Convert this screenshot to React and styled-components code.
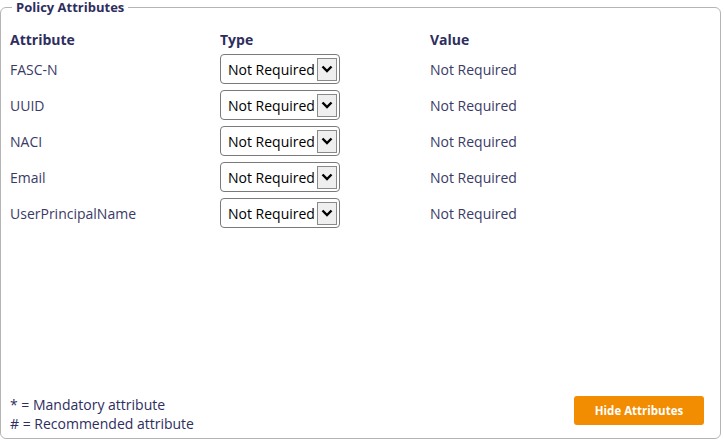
import React from "react";
import styled, { createGlobalStyle } from "styled-components";

const GlobalStyle = createGlobalStyle`
  html, body {
    margin: 0;
    padding: 0;
    background: #ffffff;
  }
  body {
    font-family: "Open Sans", "Noto Sans", sans-serif;
    color: #2e2e5e;
  }
`;

const Panel = styled.fieldset`
  box-sizing: border-box;
  width: 721px;
  height: 439px;
  margin: 0;
  padding: 0 0 0 9px;
  border: 1px solid #b4b4b4;
  border-radius: 6px;
  display: flex;
  flex-direction: column;
`;

const Legend = styled.legend`
  margin-left: 2px;
  padding: 0 4px;
  font-size: 13px;
  font-weight: 700;
  color: #2e2e5e;
  line-height: 14px;
`;

const Table = styled.div`
  display: grid;
  grid-template-columns: 210px 210px 1fr;
  grid-auto-rows: 36px;
  align-items: center;
  margin-top: 1px;
`;

const HeadCell = styled.div`
  font-size: 14px;
  font-weight: 700;
  color: #2e2e5e;
  align-self: end;
  height: 22px;
  line-height: 22px;
`;

const Cell = styled.div`
  font-size: 14px;
  color: #3a3a66;
`;

const SelectBox = styled.div`
  box-sizing: border-box;
  width: 120px;
  height: 30px;
  border: 1px solid #7a7a7a;
  border-radius: 4px;
  background: #fff;
  display: flex;
  align-items: center;
  justify-content: space-between;
  padding: 0 2px 0 7px;
  font-size: 14px;
  color: #000;
  white-space: nowrap;
`;

const ArrowBox = styled.span`
  box-sizing: border-box;
  flex: none;
  width: 20px;
  height: 23px;
  border: 1px solid #8a8a8a;
  background: #efefef;
  display: flex;
  align-items: center;
  justify-content: center;
`;

const Footer = styled.div`
  margin-top: auto;
  display: flex;
  align-items: center;
  justify-content: space-between;
  padding: 0 16px 5px 0;
`;

const Notes = styled.div`
  font-size: 14px;
  line-height: 19px;
  color: #2e2e5e;
`;

const HideButton = styled.button`
  width: 130px;
  height: 29px;
  margin-bottom: 8px;
  border: none;
  border-radius: 3px;
  background: #f28c00;
  color: #ffffff;
  font-family: "Open Sans", "Noto Sans", sans-serif;
  font-size: 11.5px;
  font-weight: 700;
  cursor: pointer;
`;

const attributes = ["FASC-N", "UUID", "NACI", "Email", "UserPrincipalName"];

function Chevron() {
  return (
    <svg width="12" height="8" viewBox="0 0 12 8">
      <path d="M1.5 1.5 L6 6 L10.5 1.5" fill="none" stroke="#000" strokeWidth="2.4" />
    </svg>
  );
}

export default function App() {
  return (
    <>
      <GlobalStyle />
      <Panel>
        <Legend>Policy Attributes</Legend>
        <Table>
          <HeadCell>Attribute</HeadCell>
          <HeadCell>Type</HeadCell>
          <HeadCell>Value</HeadCell>
          {attributes.map((name) => (
            <React.Fragment key={name}>
              <Cell>{name}</Cell>
              <div>
                <SelectBox>
                  <span>Not Required</span>
                  <ArrowBox>
                    <Chevron />
                  </ArrowBox>
                </SelectBox>
              </div>
              <Cell>Not Required</Cell>
            </React.Fragment>
          ))}
        </Table>
        <Footer>
          <Notes>
            <div>* = Mandatory attribute</div>
            <div># = Recommended attribute</div>
          </Notes>
          <HideButton>Hide Attributes</HideButton>
        </Footer>
      </Panel>
    </>
  );
}
